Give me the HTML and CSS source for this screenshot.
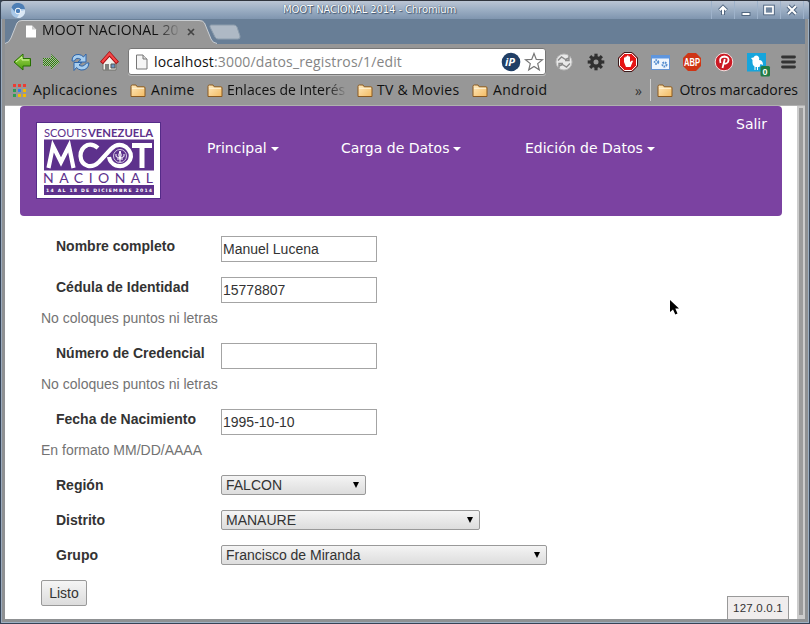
FILE: index.html
```html
<!DOCTYPE html>
<html lang="es">
<head>
<meta charset="utf-8">
<title>MOOT NACIONAL 2014</title>
<link rel="stylesheet" href="styles.css">
</head>
<body>
<svg width="0" height="0" class="defs">
  <defs>
    <linearGradient id="gold" x1="0" y1="0" x2="1" y2="1"><stop offset="0" stop-color="#ffe9bd"/><stop offset="1" stop-color="#f3bb62"/></linearGradient>
    <linearGradient id="green" x1="0" y1="0" x2="0" y2="1"><stop offset="0" stop-color="#a4df50"/><stop offset="1" stop-color="#4c9b10"/></linearGradient>
    <pattern id="dither" width="2" height="2" patternUnits="userSpaceOnUse"><path d="M0 0h1v1H0zM1 1h1v1H1z" fill="#2f7a10"/><path d="M1 0h1v1H1zM0 1h1v1H0z" fill="#a9bd9c"/></pattern>
    <symbol id="folder" viewBox="0 0 16 14"><path d="M1 12.5V2.5Q1 1 2.3 1H6L7.2 2.8H14Q15 2.8 15 4V12.5Z" fill="url(#gold)" stroke="#8b5a20"/><path d="M2 4.3H14" stroke="#fff3d6"/></symbol>
  </defs>
</svg>
<div class="window">
  <div class="titlebar">
    <svg class="app" width="16" height="16" viewBox="0 0 16 16"><circle cx="8" cy="8" r="7" fill="#a9c8e8"/><path d="M1.500 4.500A7 7 0 0 1 15 6H8L5 9Z" fill="#4d7eb5"/><path d="M15 7A7 7 0 0 1 7 15L11 8Z" fill="#dbe8f5"/><circle cx="8" cy="8" r="2.800" fill="#4d80ba" stroke="#fff"/></svg>
    <span class="caption">MOOT NACIONAL 2014 - Chromium</span>
    <svg class="controls" width="93" height="18" viewBox="0 0 93 18"><path d="M.5 0V18M23.500 0V18M46.500 0V18M69.500 0V18M92.500 0V18" stroke="#9eb2ca"/><path d="M12 14V7M8.500 9.500L12 6L15.500 9.500" fill="none" stroke="#516680" stroke-width="4"/><path d="M12 13.500V7M8.700 9.300L12 6L15.300 9.300" fill="none" stroke="#fff" stroke-width="2"/><rect x="31" y="11.500" width="8" height="3" fill="#fff" stroke="#506780"/><rect x="54" y="5.500" width="8" height="7" fill="none" stroke="#516680" stroke-width="3.600"/><rect x="54" y="5.500" width="8" height="7" fill="#71869f" stroke="#fff" stroke-width="1.700"/><path d="M77 5L85 13M85 5L77 13" stroke="#516680" stroke-width="4"/><path d="M77 5L85 13M85 5L77 13" stroke="#fff" stroke-width="2"/></svg>
  </div>
  <div class="tabstrip">
    <div class="tab">
      <svg class="tabshape" width="240" height="25" viewBox="0 0 240 25"><path d="M0 25Q4 24 6 19L12 4Q13.500 1 17 1H194Q198 1 199.500 4L206 20Q207.500 24 212 25Z" fill="#979797"/><path d="M0 24.500Q4 24 6 19L12 4Q13.500 1.500 17 1.500H194Q198 1.500 199.500 4L206 20Q207.500 24 212 24.500" fill="none" stroke="#cbcfd3"/><path d="M206 6H229Q231 6 232 8L235 17Q235.500 20 233 20H213Q211 20 210 18L205 8Q204.500 6 206 6Z" fill="#aeb9c5" stroke="#8b9cac"/></svg>
      <svg class="file" width="12" height="13" viewBox="0 0 12 13"><path d="M1 .5H7L11 4.500V12.500H1Z" fill="#fff"/><path d="M7 .5V4.500H11" fill="#ccc"/></svg>
      <span class="tabtitle">MOOT NACIONAL 20</span>
      <svg class="close" width="8" height="8" viewBox="0 0 8 8"><path d="M1 1L7 7M7 1L1 7" stroke="#444" stroke-width="1.700"/></svg>
    </div>
  </div>
  <div class="toolbar">
    <svg class="nav-icons" width="112" height="24" viewBox="0 0 112 24">
      <path d="M1 12L10 4V8.500H17.500V16H10V20Z" fill="url(#green)" stroke="#267000"/><path d="M3 12L9 7V10H16" fill="none" stroke="#d3f5a0"/>
      <path d="M47 12L38 4V8H30V16H38V20Z" fill="url(#dither)"/>
      <path d="M59 11Q59 4 66 4.500Q69 5 70.500 7L73 4V12H65L68 9.500Q63 6.500 61.500 11ZM76 13Q75 20.500 68 20Q65 19.500 63.500 17.500L61 20.500V12.500H69L66 15Q70 18 73.500 13Z" fill="#a8ceef" stroke="#2e65aa"/>
      <path d="M90 12V20H103V12L96.500 6Z" fill="#f2f2ec" stroke="#72736d"/><path d="M92 14H96V20H92Z" fill="#7f817e"/><path d="M98 14H102V18H98Z" fill="#6b96c5" stroke="#555"/><path d="M88.500 13L96.500 4L104.500 13" fill="none" stroke="#a40d12" stroke-width="4"/><path d="M89 12.200L96.500 3.700L104 12.200" fill="none" stroke="#f44747" stroke-width="2.200"/>
    </svg>
    <div class="omnibox">
      <svg width="13" height="16" viewBox="0 0 13 16"><path d="M1.500 1H8L12 5V15H1.500Z" fill="#f5f5f5" stroke="#777"/><path d="M8 1V5H12" fill="#ddd" stroke="#777"/></svg>
      <span class="url"><b>localhost</b>:3000/datos_registros/1/edit</span>
      <svg class="ip" width="44" height="22" viewBox="0 0 44 22"><circle cx="11" cy="11" r="9.300" fill="#213f66"/><text x="5" y="15" class="iptext">iP</text><path d="M34 2.500L36.300 8.400L42.500 8.700L37.700 12.600L39.300 18.800L34 15.400L28.700 18.800L30.300 12.600L25.500 8.700L31.700 8.400Z" fill="#fff" stroke="#777" stroke-width="1.200"/></svg>
    </div>
    <svg class="extensions" width="246" height="34" viewBox="0 -1 246 34">
      <circle cx="14" cy="16" r="8" fill="#e9e9e9" stroke="#bbb"/><path d="M8 14.500L11.500 11L15.500 13.500L19 12M19 9.500V14.500H15M20 17.500L16.500 21L12.500 18.500L9 20M9 22V17.500H13" fill="none" stroke="#8b8b8b" stroke-width="1.400"/>
      <g transform="translate(46 16)"><g fill="#303030"><circle r="6"/><g id="teeth"><rect x="-1.600" y="-8.300" width="3.200" height="16.600"/><rect x="-8.300" y="-1.600" width="16.600" height="3.200"/></g><use href="#teeth" transform="rotate(45)"/></g><circle r="2.500" fill="#999"/></g>
      <path d="M74 6.500H82L87.500 12V20L82 25.500H74L68.500 20V12Z" fill="#e51414" stroke="#381b1b"/><path d="M74.400 7.500H81.600L86.500 12.400V19.600L81.600 24.500H74.400L69.500 19.600V12.400Z" fill="none" stroke="#fff"/><path d="M74 16V11.500H75.500V15V10.500H77V14V9.500H78.500V14V10.500H80V16L82 14.500L83 15L80.500 21H76Z" fill="#fff"/>
      <rect x="101.500" y="9.500" width="18" height="14" fill="#eef5fd" stroke="#6594d2"/><path d="M101 11H120" stroke="#5e96df" stroke-width="3"/><circle cx="106.500" cy="16" r="1.800" fill="none" stroke="#528bce" stroke-width="2" stroke-dasharray="1.500 .7"/><circle cx="114.500" cy="18.500" r="2" fill="none" stroke="#528bce" stroke-width="2" stroke-dasharray="1.500 .7"/>
      <path d="M138 7H146L151 12V20L146 25H138L133 20V12Z" fill="#cf3515"/><text x="134" y="20" textLength="16" lengthAdjust="spacingAndGlyphs" class="abp">ABP</text>
      <circle cx="174" cy="16" r="8.800" fill="#cb1923" stroke="#f4dede"/><path d="M170.500 17Q168.500 11 174.500 10.500Q180 11 178 16Q175.500 19 173.800 16.500M174.800 13L172.500 22" fill="none" stroke="#fff" stroke-width="1.800"/>
      <rect x="197" y="7" width="19" height="18.500" fill="#16a5dc"/><path d="M201 12L203.500 11.500Q205 8.500 208 10Q210 12 209 14Q213 14 213 19L210.500 18L209.500 21L208 21V24H207V21H205.500V24H204.500V20.500Q202 19 202.500 14Z" fill="#fff"/><rect x="210.500" y="20" width="9.500" height="10.500" rx="1.500" fill="#207b43"/><text x="212.600" y="28.700" class="badge">0</text>
      <path d="M232.500 11H244.500M232.500 16H244.500M232.500 21H244.500" stroke="#333" stroke-width="2.800" stroke-linecap="round"/>
    </svg>
  </div>
  <div class="bookmarks">
    <svg class="apps" width="13" height="14" viewBox="0 0 13 14"><path d="M0 0h3v3H0zM5 0h3v3H5zM10 0h3v3h-3z" fill="#ec3d34"/><path d="M0 5h3v3H0z" fill="#2d9d54"/><path d="M5 5h3v3H5z" fill="#357eed"/><path d="M10 5h3v3h-3zM5 10h3v3H5zM10 10h3v3h-3z" fill="#f3b900"/><path d="M0 10h3v3H0z" fill="#2d9d54"/></svg>
    <span class="bm b-app">Aplicaciones</span>
    <svg class="fold"><use href="#folder"/></svg><span class="bm b-anime">Anime</span>
    <svg class="fold"><use href="#folder"/></svg><span class="bm b-int">Enlaces de Interés</span>
    <svg class="fold"><use href="#folder"/></svg><span class="bm b-tv">TV &amp; Movies</span>
    <svg class="fold"><use href="#folder"/></svg><span class="bm b-and">Android</span>
    <span class="more">»</span><i class="sep"></i>
    <svg class="fold"><use href="#folder"/></svg><span class="bm b-otros">Otros marcadores</span>
  </div>
  <div class="viewport">
    <main>
      <header class="navbar">
        <svg class="logo" width="125" height="77" viewBox="0 0 125 77">
          <rect x=".5" y=".5" width="124" height="76" fill="#fff" stroke="#552b88"/>
          <g fill="#5d318c"><text x="8" y="14.500" textLength="43" lengthAdjust="spacingAndGlyphs" class="scouts">SCOUTS</text><text x="52" y="14.500" textLength="65" lengthAdjust="spacingAndGlyphs" class="venezuela">VENEZUELA</text>
          <rect x="8" y="17.500" width="110" height="31"/><text x="7" y="60.500" textLength="110" class="nacional">NACIONAL</text><rect x="8" y="63" width="110" height="10"/></g>
          <path d="M12.500 46L17 24L25 40L33 24L37.500 46" fill="none" stroke="#fff" stroke-width="4.200"/>
          <path d="M62 26Q57 21.500 51.500 23Q44.500 26 44.500 34Q45 42 52 44Q58 45 63 40L75 27Q82 20 90 25Q97 31 94 38Q89 46 80 43.500Q74 41 73 35" fill="none" stroke="#fff" stroke-width="4.200"/>
          <path d="M96 23.500H116M106 23V46" stroke="#fff" stroke-width="5"/>
          <circle cx="84" cy="34" r="6.500" fill="#5d318c" stroke="#d7c9e4"/><path d="M84 29Q81.500 33 84 37Q86.500 33 84 29M81 37H87M84 29V40M83 36Q78.500 35 80 32M85 36Q89.500 35 88 32" fill="none" stroke="#fff"/>
          <text x="10" y="70.300" textLength="106" lengthAdjust="spacing" class="dates">14 AL 18 DE DICIEMBRE 2014</text>
        </svg>
        <nav><a class="m1">Principal<i></i></a><a class="m2">Carga de Datos<i></i></a><a class="m3">Edición de Datos<i></i></a></nav>
        <a class="salir">Salir</a>
      </header>
      <form>
        <div class="row"><label>Nombre completo</label><input value="Manuel Lucena"></div>
        <div class="row"><label>Cédula de Identidad</label><input value="15778807"></div>
        <p>No coloques puntos ni letras</p>
        <div class="row"><label>Número de Credencial</label><input value=""></div>
        <p>No coloques puntos ni letras</p>
        <div class="row"><label>Fecha de Nacimiento</label><input value="1995-10-10"></div>
        <p>En formato MM/DD/AAAA</p>
        <div class="row pick"><label>Región</label><div class="select s1">FALCON<i></i></div></div>
        <div class="row pick"><label>Distrito</label><div class="select s2">MANAURE<i></i></div></div>
        <div class="row pick"><label>Grupo</label><div class="select s3">Francisco de Miranda<i></i></div></div>
        <button type="button">Listo</button>
      </form>
    </main>
    <div class="scroll"><i></i></div>
    <div class="status">127.0.0.1</div>
    <svg class="cursor" width="12" height="17" viewBox="0 0 12 17"><path d="M1 1V13L4 10.500L6.300 15.500L8.500 14.500L6.300 9.500H10Z" fill="#000"/></svg>
  </div>
</div>
</body>
</html>
```
FILE: styles.css
```css
* { box-sizing: border-box; }
body { margin: 0; width: 810px; height: 624px; overflow: hidden; background: #354252; }
svg { display: block; flex: none; }
.defs { position: absolute; }
.window { width: 810px; height: 624px; border: 1px solid #364457; border-top-color: #30343d; border-radius: 4px 4px 0 0; background: #8f9193; box-shadow: inset 1px 0 #99aabd, inset -1px -1px #9eb1c4; overflow: hidden; }
.titlebar { height: 18px; display: flex; align-items: center; background: linear-gradient(#bbc5d4 0, #9eb0c5 45%, #7f95af 100%); }
.app { margin: 1px 0 0 9px; }
.caption { flex: 1; padding-left: 257px; color: #fff; font: 10px/18px "DejaVu Sans", sans-serif; text-shadow: 0 0 1px #283f58, 1px 1px 1px #425873; white-space: nowrap; letter-spacing: -.1px; }
.controls { margin-right: 5px; }
.tabstrip { height: 25px; margin: 0 4px; background: #687e96; }
.tab { height: 25px; display: flex; align-items: center; position: relative; }
.tabshape { position: absolute; left: 0; top: 0; }
.file { position: relative; margin-left: 20px; }
.tabtitle { position: relative; margin-left: 5px; width: 139px; height: 23px; padding-bottom: 2px; overflow: hidden; white-space: nowrap; font: 14px/20px "Open Sans", sans-serif; letter-spacing: .1px; color: #111; -webkit-mask-image: linear-gradient(to right, #000 82%, transparent 100%); }
.close { position: relative; margin: 0 0 0 6px; }
.toolbar { height: 35px; margin: 0 4px; display: flex; align-items: center; background: #979797; }
.nav-icons { margin: 1px 0 0 8px; }
.omnibox { width: 418px; height: 27px; margin-left: 3px; background: #fff; border: 1px solid #777; border-radius: 3px; display: flex; align-items: center; padding-left: 6px; box-shadow: 0 1px #bbb; }
.url { flex: none; width: 352px; padding-left: 6px; font: 14px/24px "Open Sans", sans-serif; color: #858585; white-space: nowrap; letter-spacing: .15px; }
.url b { font-weight: 400; color: #111; }
.ip { margin-top: 1px; }
.iptext { font: italic bold 11px "Open Sans", sans-serif; fill: #fff; }
.extensions { margin-left: 4px; }
.abp { font: bold 10px "Liberation Sans", sans-serif; fill: #fff; }
.badge { font: bold 9px "Liberation Sans", sans-serif; fill: #fff; }
.bookmarks { height: 26px; margin: 0 4px; padding: 0 7px 4px 8px; display: flex; align-items: center; background: #979797; white-space: nowrap; }
.bm { flex: none; height: 22px; padding-left: 5px; overflow: hidden; font: 14px/21px "Open Sans", sans-serif; color: #111; }
.apps, .fold { margin-top: 1px; }
.fold { width: 16px; height: 14px; }
.b-app { width: 104px; padding-left: 7px; letter-spacing: .3px; }
.b-anime { width: 61px; letter-spacing: .4px; }
.b-int { width: 134px; padding-left: 4px; -webkit-mask-image: linear-gradient(to right, #000 78%, transparent 93%); }
.b-tv { width: 99px; padding-left: 4px; letter-spacing: .25px; }
.b-and { width: 146px; letter-spacing: .3px; }
.b-otros { padding-left: 6px; }
.more { width: 16px; padding-left: 1px; font: 14px "Open Sans", sans-serif; color: #333; }
.sep { width: 1px; height: 22px; background: #d0d0d0; margin: 0 7px; }
.viewport { position: relative; height: 514px; margin: 0 4px; display: flex; background: #fff; border-top: 1px solid #b0b0b0; font: 14px/20px "Liberation Sans", sans-serif; color: #333; }
main { width: 792px; padding: 0 15px; }
.navbar { display: flex; width: 762px; height: 110px; padding-left: 16px; background: #7b42a1; border-radius: 4px; font: 14px/20px "DejaVu Sans", sans-serif; color: #fff; }
.logo { margin-top: 16px; }
nav { display: flex; width: 575px; padding: 32px 0 0 46px; }
nav a { display: flex; align-items: center; height: 20px; white-space: nowrap; }
nav i { border: 4px solid transparent; border-top-color: #fff; border-bottom: 0; margin: 2px 0 0 4px; }
.m1 { width: 134px; }
.m2 { width: 184px; }
.salir { padding-top: 8px; }
form { padding: 20px 0 0 21px; }
.row { height: 26px; display: flex; margin-bottom: 15px; }
label { width: 180px; padding-left: 15px; font-weight: 700; line-height: 20px; }
input { width: 156px; height: 26px; padding: 0 1px; border: 1px solid #a4a4a4; border-radius: 0; font: 14px "Liberation Sans", sans-serif; color: #333; }
p { margin: -10px 0 15px; height: 20px; color: #737373; }
.pick { height: 20px; }
.select { height: 20px; border: 1px solid #999; border-radius: 2px; background: linear-gradient(#f4f4f4, #ddd); display: flex; align-items: center; padding: 0 6px 0 4px; line-height: 18px; }
.select i { margin-left: auto; border: 3px solid transparent; border-top: 6px solid #000; border-bottom: 0; }
.s1 { width: 145px; }
.s2 { width: 259px; }
.s3 { width: 326px; }
button { display: block; width: 46px; height: 26px; padding: 0; border: 1px solid #999; border-radius: 2px; background: linear-gradient(#f5f5f5, #dcdcdc); font: 14px "Liberation Sans", sans-serif; color: #333; }
.scroll { width: 8px; height: 513px; background: #ccc; padding: 2px 2px 4px; }
.scroll i { display: block; height: 100%; background: #9c9c9c; }
.status { position: absolute; left: 722px; bottom: 0; width: 62px; height: 23px; border: 1px solid #999; border-bottom: 0; background: #f0eded; font: 11.5px/23px "Liberation Sans", sans-serif; letter-spacing: .2px; text-align: center; }
.cursor { position: absolute; left: 664px; top: 193px; }
.scouts { font: 12px Lato, sans-serif; }
.venezuela { font: bold 12px Lato, sans-serif; }
.nacional { font: 14px Lato, sans-serif; }
.dates { font: bold 4.6px "DejaVu Sans", sans-serif; fill: #fff; }
```
